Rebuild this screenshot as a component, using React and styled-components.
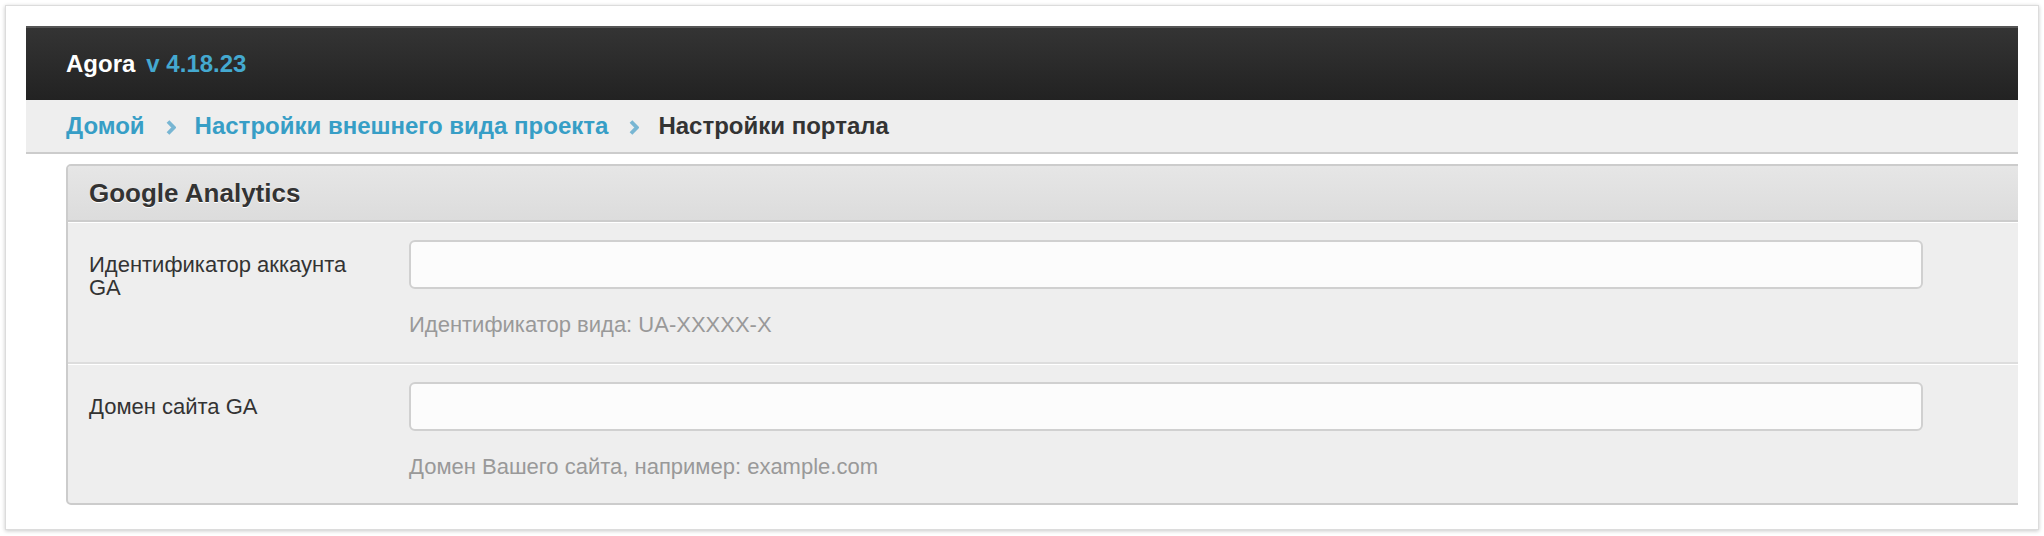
import React from 'react'
import styled, { createGlobalStyle } from 'styled-components'

const GlobalStyle = createGlobalStyle`
  body {
    margin: 0;
    background: #fff;
    font-family: "Liberation Sans", Arial, Helvetica, sans-serif;
  }
`

const Page = styled.div`
  padding: 5px 5px 6px 5px;
`

const Frame = styled.div`
  background: #fff;
  border: 1px solid #dcdcdc;
  box-shadow: 0 1px 4px rgba(0, 0, 0, 0.22);
  padding: 20px 20px 24px 20px;
`

const TopBar = styled.div`
  height: 72px;
  display: flex;
  align-items: center;
  padding-left: 40px;
  border-top: 2px solid #555;
  background: linear-gradient(to bottom, #343434, #222);
`

const Brand = styled.span`
  font-size: 24px;
  font-weight: bold;
  color: #fff;
`

const Version = styled.span`
  margin-left: 11px;
  font-size: 24px;
  font-weight: bold;
  color: #44a9d0;
`

const Breadcrumbs = styled.nav`
  height: 52px;
  display: flex;
  align-items: center;
  padding-left: 40px;
  background: #eee;
  border-bottom: 2px solid #ccc;
  font-size: 24px;
  font-weight: bold;
`

const Crumb = styled.a`
  color: ${p => (p.current ? '#333' : '#379ec6')};
  text-decoration: none;
`

const Chevron = styled.svg`
  margin: 2px 19px 0 21px;
  flex: none;
`

const Content = styled.div`
  overflow: hidden;
  padding-top: 10px;
`

const Panel = styled.section`
  margin-left: 40px;
  margin-right: -12px;
  border: 2px solid #ccc;
  border-radius: 5px;
  background: #eee;
  overflow: hidden;
`

const PanelHead = styled.h2`
  margin: 0;
  height: 54px;
  display: flex;
  align-items: center;
  padding-left: 21px;
  border-bottom: 2px solid #ccc;
  background: linear-gradient(to bottom, #e6e6e6, #dcdcdc);
  font-size: 26px;
  font-weight: bold;
  color: #333;
  text-shadow: 0 1px 0 #fff;
`

const Row = styled.div`
  display: grid;
  grid-template-columns: 320px 1514px;
  padding: 17px 0 0 21px;
  border-top: 1px solid #fff;
  border-bottom: ${p => (p.last ? 'none' : '2px solid #ddd')};
  height: ${p => (p.last ? '139px' : '142px')};
  box-sizing: border-box;
`

const Label = styled.label`
  padding: 13px 30px 0 0;
  font-size: 22px;
  line-height: 23px;
  color: #333;
`

const Field = styled.div`
  display: flex;
  flex-direction: column;
`

const Input = styled.input`
  box-sizing: border-box;
  width: 100%;
  height: 49px;
  border: 2px solid #d0d0d0;
  border-radius: 6px;
  background: #fcfcfc;
  outline: none;
`

const Help = styled.div`
  margin-top: 24px;
  font-size: 22px;
  line-height: 24px;
  color: #999;
`

const fields = [
  { label: 'Идентификатор аккаунта GA', help: 'Идентификатор вида: UA-XXXXX-X' },
  { label: 'Домен сайта GA', help: 'Домен Вашего сайта, например: example.com' },
]

const Sep = () => (
  <Chevron width="10" height="15" viewBox="0 0 10 15">
    <polyline points="2,1.5 7.8,7.5 2,13.5" fill="none" stroke="#78b6d3" strokeWidth="3.8" />
  </Chevron>
)

const App = () => (
  <>
    <GlobalStyle />
    <Page>
      <Frame>
        <TopBar>
          <Brand>Agora</Brand>
          <Version>v 4.18.23</Version>
        </TopBar>
        <Breadcrumbs>
          <Crumb href="#">Домой</Crumb>
          <Sep />
          <Crumb href="#">Настройки внешнего вида проекта</Crumb>
          <Sep />
          <Crumb current>Настройки портала</Crumb>
        </Breadcrumbs>
        <Content>
          <Panel>
            <PanelHead>Google Analytics</PanelHead>
            {fields.map((f, i) => (
              <Row key={f.label} last={i === fields.length - 1}>
                <Label>{f.label}</Label>
                <Field>
                  <Input type="text" />
                  <Help>{f.help}</Help>
                </Field>
              </Row>
            ))}
          </Panel>
        </Content>
      </Frame>
    </Page>
  </>
)

export default App
